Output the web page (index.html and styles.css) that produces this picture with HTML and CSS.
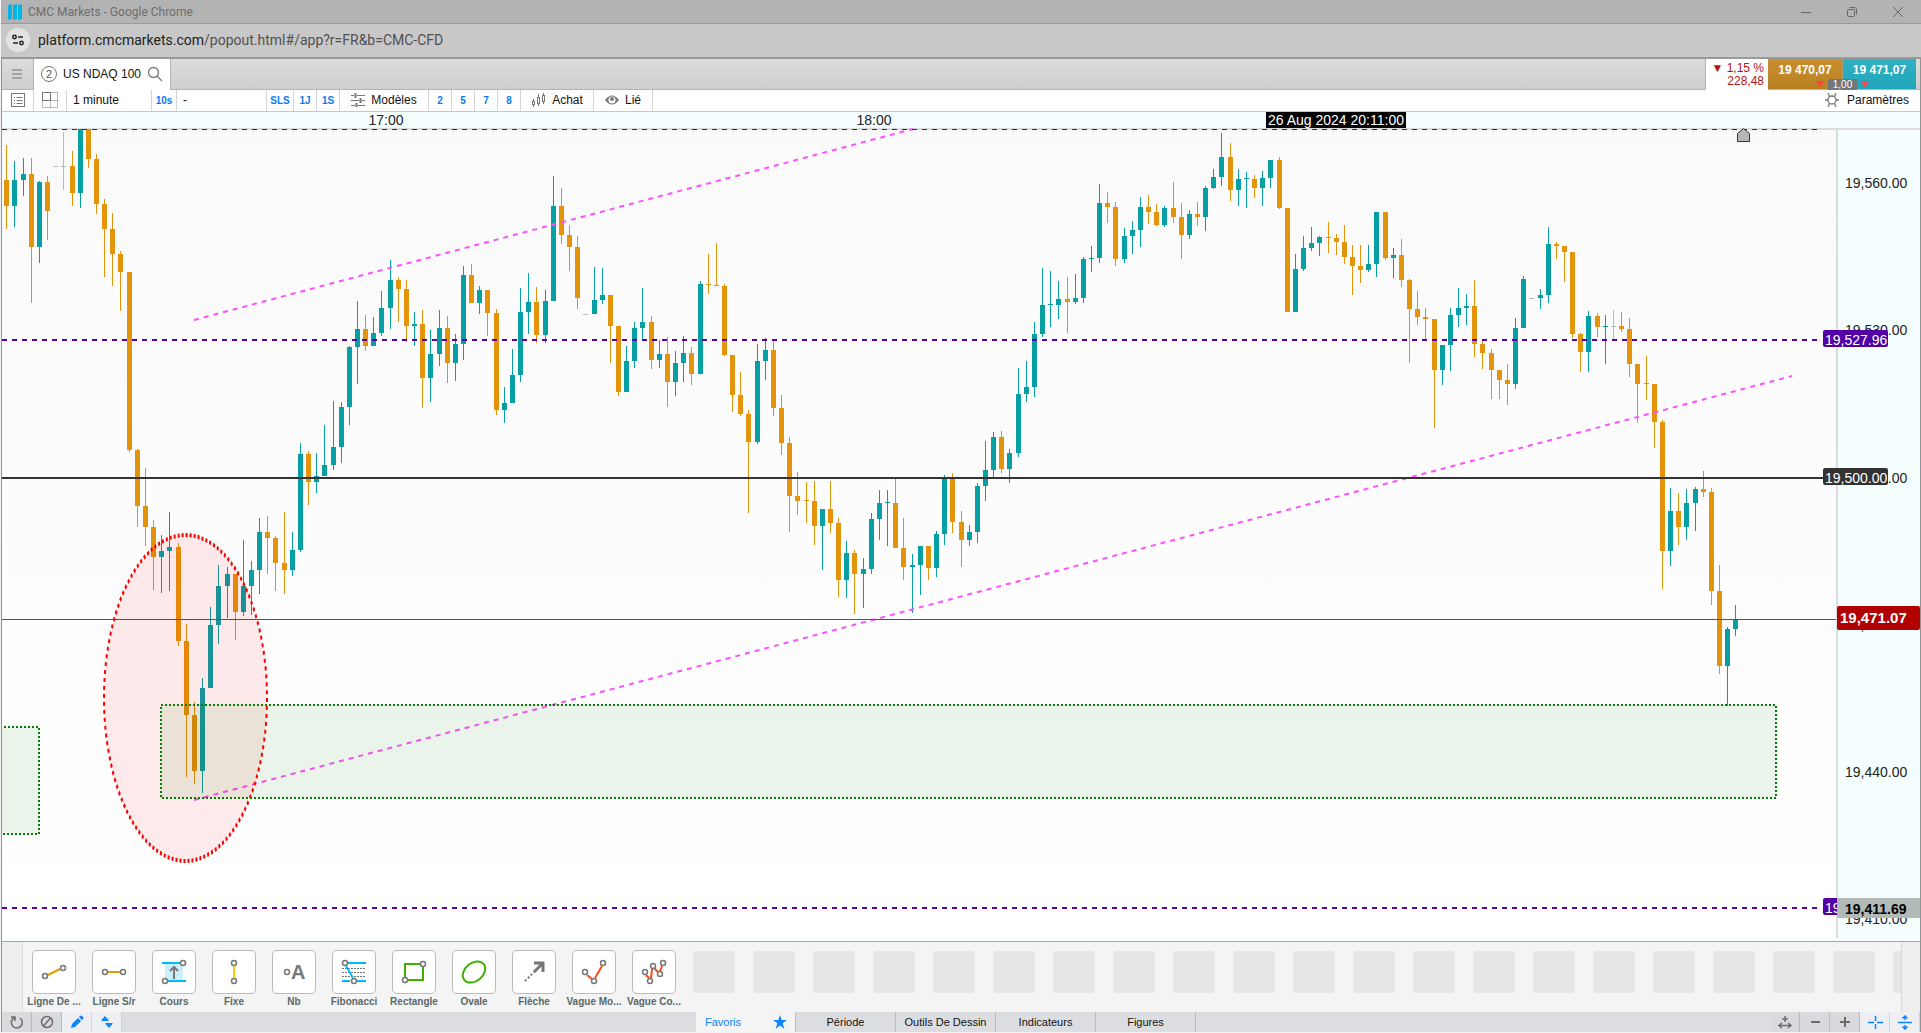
FILE: index.html
```html
<!DOCTYPE html>
<html lang="fr">
<head>
<meta charset="utf-8">
<title>CMC Markets</title>
<link rel="stylesheet" href="styles.css">
</head>
<body>
<header class="titlebar">
  <svg class="logo" width="16" height="16" viewBox="0 0 16 16"><path d="M0 1l4-1v15l-4 1zM5 1l4-1v15l-4 1zM10 1l4-1v15l-4 1z" fill="#00b4e6"/></svg>
  <span class="window-title">CMC Markets - Google Chrome</span>
  <div class="window-buttons">
    <button aria-label="Réduire"><svg width="12" height="12"><path d="M1 6.500h10"/></svg></button>
    <button aria-label="Restaurer"><svg width="12" height="12"><rect x="1.500" y="3.500" width="7" height="7" rx="1"/><path d="M3.500 1.500h5a2 2 0 0 1 2 2v5"/></svg></button>
    <button aria-label="Fermer"><svg width="12" height="12"><path d="M1 1l10 10M11 1L1 11"/></svg></button>
  </div>
</header>
<div class="addressbar">
  <button class="site-info" aria-label="Informations du site"><svg width="12" height="12" fill="none" stroke="#222" stroke-width="1.500"><circle cx="2.500" cy="3" r="1.700"/><path d="M6 3h5M1 9h5"/><circle cx="9.500" cy="9" r="1.700"/></svg></button>
  <span class="url"><b>platform.cmcmarkets.com</b>/popout.html#/app?r=FR&amp;b=CMC-CFD</span>
</div>
<main class="app">
  <div class="tabbar">
    <button class="menu" aria-label="Menu"><svg width="12" height="12"><path d="M1 2h10M1 6h10M1 10h10" stroke="#a4a4a4" stroke-width="2"/></svg></button>
    <div class="tab">
      <span class="tab-group">2</span>
      <span>US NDAQ 100</span>
      <svg width="16" height="16" fill="none" stroke="#777" stroke-width="1.300"><circle cx="6.500" cy="6.500" r="5"/><path d="M10 10l5 5"/></svg>
    </div>
    <div class="quote">
      <div class="change"><span>▼ 1,15 %</span><span>228,48</span></div>
      <button class="price sell">19 470,07</button>
      <button class="price buy">19 471,07</button>
      <div class="spread"><i></i><span>1,00</span><i></i></div>
    </div>
  </div>
  <div class="toolbar">
    <button class="w-list" aria-label="Liste"><svg width="14" height="14" fill="none" stroke="#777"><rect x=".5" y=".5" width="13" height="13"/><path d="M3 4.500h1M5.500 4.500h6M3 7.500h1M5.500 7.500h6M3 10.500h1M5.500 10.500h6"/></svg></button>
    <button class="w-grid" aria-label="Disposition"><svg width="16" height="16" fill="none" stroke="#777"><rect x=".5" y=".5" width="8" height="8"/><path d="M8.500.5h7v15h-15v-7M8.500 8.500h7M8.500 8.500v7" stroke-dasharray="1 1"/></svg></button>
    <select class="w-interval" aria-label="Intervalle"><option>1 minute</option></select>
    <button class="w-short quick">10s</button>
    <select class="w-range" aria-label="Plage"><option>-</option></select>
    <button class="w-sls quick">SLS</button>
    <button class="w-num quick">1J</button>
    <button class="w-num quick">1S</button>
    <button class="w-models"><svg width="14" height="14" fill="none" stroke="#777"><path d="M0 2.500h3M6 2.500h8M0 7.500h8M11 7.500h3M0 12.500h4M7 12.500h7"/><path d="M4.500 0v5M9.500 5v5M5.500 10v4" stroke-width="2"/></svg>Modèles</button>
    <button class="w-num quick">2</button>
    <button class="w-num quick">5</button>
    <button class="w-num quick">7</button>
    <button class="w-num quick">8</button>
    <button class="w-buy"><svg width="15" height="14" fill="none" stroke="#777"><path d="M2.500 6v2M2.500 12v2M7.500 1v3M7.500 11v2M12.500 0v2M12.500 9v2"/><rect x="1.500" y="8.500" width="2" height="3"/><rect x="6.500" y="4.500" width="2" height="6"/><rect x="11.500" y="2.500" width="2" height="6"/></svg>Achat</button>
    <button class="w-link"><svg width="14" height="12"><path d="M0 6Q7-3 14 6Q7 15 0 6z" fill="#777"/><circle cx="7" cy="6" r="3.500" fill="#fff"/><circle cx="7" cy="5" r="2" fill="#777"/></svg>Lié</button>
    <button class="settings"><svg width="14" height="14" fill="none" stroke="#777" stroke-width="1.300"><circle cx="7" cy="7" r="4"/><path d="M3 0l1.500 3.500M11 0L9.500 3.500M3 14l1.500-3.500M11 14L9.500 10.500M0 7h3M11 7h3"/></svg>Paramètres</button>
  </div>
  <section class="chart">
    <div class="chart-body">
      <svg class="plot" id="plot" aria-label="US NDAQ 100, 1 minute"></svg>
    </div>
    <svg class="axis" id="axis" aria-label="Échelle des prix"></svg>
  </section>
  <div class="toolbox">
    <div class="tools">
      <div class="tool"><button aria-labelledby="t1"><svg viewBox="0 0 44 44"><path class="gold" d="M16 25l12-6"/><circle cx="13" cy="26" r="2.500"/><circle cx="31" cy="18" r="2.500"/></svg></button><span id="t1">Ligne De ...</span></div>
      <div class="tool"><button aria-labelledby="t2"><svg viewBox="0 0 44 44"><path class="gold" d="M16 22h12"/><circle cx="13" cy="22" r="2.500"/><circle cx="31" cy="22" r="2.500"/></svg></button><span id="t2">Ligne S/r</span></div>
      <div class="tool"><button aria-labelledby="t3"><svg viewBox="0 0 44 44"><path d="M13 13h18v18H13z" fill="#cbeffc" stroke="none"/><path class="sky" d="M10 13h18M16 31h18"/><path d="M22 29V17M18 21l4-4 4 4" stroke-width="2"/><circle cx="31" cy="13" r="2.500"/><circle cx="13" cy="31" r="2.500"/></svg></button><span id="t3">Cours</span></div>
      <div class="tool"><button aria-labelledby="t4"><svg viewBox="0 0 44 44"><path class="yellow" d="M22 16v12"/><circle cx="22" cy="13" r="2.500"/><circle cx="22" cy="31" r="2.500"/></svg></button><span id="t4">Fixe</span></div>
      <div class="tool"><button aria-labelledby="t5"><svg viewBox="0 0 44 44"><circle cx="15" cy="22" r="2.500"/><text x="19" y="29">A</text></svg></button><span id="t5">Nb</span></div>
      <div class="tool"><button aria-labelledby="t6"><svg viewBox="0 0 44 44"><path d="M10 18.500h24M10 22.500h24M10 26.500h24" stroke-width="1" stroke-dasharray="2 1"/><path class="sky" d="M16 13h18M10 31h8M25 31h9M14 16l7 12"/><circle cx="13" cy="13" r="2.500"/><circle cx="22" cy="31" r="2.500"/></svg></button><span id="t6">Fibonacci</span></div>
      <div class="tool"><button aria-labelledby="t7"><svg viewBox="0 0 44 44"><path class="green" d="M28 14H13v13M16 30h15V17"/><circle cx="31" cy="14" r="2.500"/><circle cx="13" cy="30" r="2.500"/></svg></button><span id="t7">Rectangle</span></div>
      <div class="tool"><button aria-labelledby="t8"><svg viewBox="0 0 44 44"><ellipse class="green" cx="22" cy="22" rx="12.500" ry="9" transform="rotate(-40 22 22)"/></svg></button><span id="t8">Ovale</span></div>
      <div class="tool"><button aria-labelledby="t9"><svg viewBox="0 0 44 44"><path d="M13 31l9-9" stroke-width="2" stroke-dasharray="2 2"/><path d="M22 22l8-8M22 13h9v9" stroke-width="3"/></svg></button><span id="t9">Flèche</span></div>
      <div class="tool"><button aria-labelledby="t10"><svg viewBox="0 0 44 44"><path class="red" d="M15 25l5 4M23 28l7-12"/><circle cx="13" cy="22" r="2.500"/><circle cx="22" cy="31" r="2.500"/><circle cx="31" cy="13" r="2.500"/></svg></button><span id="t10">Vague Mo...</span></div>
      <div class="tool"><button aria-labelledby="t11"><svg viewBox="0 0 44 44"><path class="red" d="M14 25l3 3M19 28l1-9M22 18l4 4M28 21l2-5"/><circle cx="13" cy="22" r="2.500"/><circle cx="18" cy="31" r="2.500"/><circle cx="21" cy="16" r="2.500"/><circle cx="28" cy="24" r="2.500"/><circle cx="31" cy="13" r="2.500"/></svg></button><span id="t11">Vague Co...</span></div>
      <i class="slot"></i><i class="slot"></i><i class="slot"></i><i class="slot"></i><i class="slot"></i><i class="slot"></i><i class="slot"></i><i class="slot"></i><i class="slot"></i><i class="slot"></i><i class="slot"></i><i class="slot"></i><i class="slot"></i><i class="slot"></i><i class="slot"></i><i class="slot"></i><i class="slot"></i><i class="slot"></i><i class="slot"></i><i class="slot"></i><i class="slot"></i>
    </div>
  </div>
  <footer class="bottombar">
    <div class="group">
      <button aria-label="Rétablir"><svg width="16" height="16"><path d="M5.500 3.500A5.500 5.500 0 1 0 11 4M2 3h4v4"/></svg></button>
      <button aria-label="Masquer"><svg width="16" height="16"><circle cx="8" cy="8" r="5.500"/><path d="M4.500 12l7-8"/></svg></button>
      <button class="on" aria-label="Dessiner"><svg width="16" height="16"><path d="M2 14l1-4 6-6 3 3-6 6zM10 3l1-1q1-1 2 0l1 1q1 1 0 2l-1 1z" fill="#0a84ff" stroke="none"/></svg></button>
      <button class="on" aria-label="Déplacer"><svg width="16" height="16"><path d="M6 2l3.500 4v1h-7V6zM10 14l-3.500-4V9h7v1z" fill="#0a84ff" stroke="none"/></svg></button>
    </div>
    <nav class="group">
      <button class="section active">Favoris<svg width="14" height="14"><path d="M7 0l1.700 5H14l-4.300 3.200L11.300 14 7 10.500 2.700 14l1.600-5.800L0 5h5.300z" fill="#0a84ff" stroke="none"/></svg></button>
      <button class="section">Période</button>
      <button class="section">Outils De Dessin</button>
      <button class="section">Indicateurs</button>
      <button class="section">Figures</button>
    </nav>
    <div class="group">
      <button aria-label="Ajuster"><svg width="16" height="16"><path d="M8 2v6M5 5h6M2.500 11.500h11M5 9l-3 2.500L5 14M11 9l3 2.500L11 14"/></svg></button>
      <button aria-label="Zoom arrière"><svg width="16" height="16"><path d="M4 8h9" stroke-width="2"/></svg></button>
      <button aria-label="Zoom avant"><svg width="16" height="16"><path d="M3 8h10M8 3v10" stroke-width="2"/></svg></button>
      <button class="on" aria-label="Réticule"><svg width="16" height="16"><path d="M1 8.500h6M10 8.500h6M8.500 2v5M8.500 10v5"/></svg></button>
      <button class="on" aria-label="Étirer"><svg width="16" height="16"><path d="M1 8.500h14M8 2v4M8 11v4M5.500 4.500L8 2l2.500 2.500M5.500 12.500L8 15l2.500-2.500"/></svg></button>
    </div>
  </footer>
</main>
<script src="chart.js"></script>
</body>
</html>
```
FILE: styles.css
```css
* { box-sizing: border-box; }
body {
  margin: 0;
  height: 100vh;
  padding: 0 0 1px 1px;
  display: flex;
  flex-direction: column;
  overflow: hidden;
  background: #f2f2f2;
  color: #111;
  font: 12px/16px "Liberation Sans", Arial, sans-serif;
}
button, select {
  margin: 0;
  padding: 0;
  border: 0;
  background: none;
  color: inherit;
  font: inherit;
  cursor: pointer;
}
svg { display: block; flex: none; }

.titlebar {
  height: 24px;
  flex: none;
  display: flex;
  align-items: center;
  gap: 4px;
  padding-left: 7px;
  background: #b3b3b3;
  border-bottom: 1px solid #999;
  font-family: Roboto, "Open Sans", sans-serif;
  color: #6e6e6e;
}
.window-buttons { margin-left: auto; display: flex; }
.window-buttons button {
  width: 46px;
  display: flex;
  justify-content: center;
}
.window-buttons svg { fill: none; stroke: #666; }

.addressbar {
  height: 35px;
  flex: none;
  display: flex;
  align-items: center;
  gap: 8px;
  padding: 0 5px 2px;
  background: #c8c8c8;
  border-bottom: 2px solid #9a9a9a;
}
.site-info {
  width: 24px;
  height: 24px;
  border-radius: 12px;
  background: #e2e2e2;
  display: flex;
  align-items: center;
  justify-content: center;
}
.url { font: 14px/20px Roboto, "Open Sans", sans-serif; color: #505050; }
.url b { font-weight: 400; color: #222; }

.app {
  flex: 1;
  min-height: 0;
  display: flex;
  flex-direction: column;
  border: solid #8e9696;
  border-width: 0 1px;
}
.tabbar {
  height: 31px;
  flex: none;
  display: flex;
  padding-right: 4px;
  background: linear-gradient(#dcdcdc, #cecece);
  border-bottom: 1px solid #b4b4b4;
}
.menu {
  width: 31px;
  display: flex;
  align-items: center;
  padding-left: 9px;
}
.tab {
  height: 31px;
  display: flex;
  align-items: center;
  gap: 6px;
  padding: 0 7px 2px;
  background: #fff;
  border: solid #b4b4b4;
  border-width: 0 1px;
}
.tab-group {
  width: 16px;
  height: 16px;
  border: 1px solid #777;
  border-radius: 8px;
  font-size: 11px;
  line-height: 14px;
  text-align: center;
  color: #555;
}
.quote { position: relative; margin-left: auto; display: flex; }
.change {
  width: 63px;
  height: 31px;
  display: flex;
  flex-direction: column;
  align-items: flex-end;
  padding: 3px 4px 0 0;
  background: #fff;
  border-left: 1px solid #b4b4b4;
  color: #b41414;
  line-height: 13px;
}
.price {
  width: 74px;
  padding-bottom: 9px;
  color: #fff;
  font-weight: 700;
}
.sell { background: linear-gradient(#c88e2e, #b98022); }
.buy { background: linear-gradient(#30b0c4, #20a6bb); border-left: 1px solid #b0a070; }
.spread {
  position: absolute;
  right: 47px;
  bottom: -1px;
  display: flex;
  align-items: center;
  gap: 4px;
}
.spread span {
  width: 29px;
  border-radius: 2px 2px 0 0;
  background: #70767a;
  color: #fff;
  font-size: 10px;
  line-height: 11px;
  text-align: center;
}
.spread i { border: 4px solid transparent; border-top: 7px solid #f44; border-bottom: 0; }

.toolbar {
  height: 22px;
  flex: none;
  display: flex;
  background: #fff;
  border-bottom: 1px solid #c4c8c8;
}
.toolbar > * {
  display: flex;
  align-items: center;
  justify-content: center;
  gap: 6px;
  padding-bottom: 2px;
  border-right: 1px solid #d4d4d4;
}
.toolbar select { appearance: none; padding-left: 6px; }
.toolbar .quick { padding-bottom: 0; color: #0a7cf0; font-size: 10px; font-weight: 700; }
.w-list { width: 32px; }
.w-grid { width: 33px; }
.w-interval { width: 85px; }
.w-short { width: 25px; }
.w-range { width: 90px; }
.w-sls { width: 27px; }
.w-num { width: 23px; }
.w-models { width: 89px; }
.w-buy { width: 73px; }
.w-link { width: 59px; }
.toolbar .settings { margin-left: auto; padding-right: 11px; gap: 8px; border: 0; }

.chart {
  flex: 1;
  min-height: 0;
  display: flex;
  background: #f6ffff;
  border-bottom: 1px solid #9cacac;
}
.chart-body { flex: 1; min-width: 0; padding-bottom: 3px; }
.plot { width: 100%; height: 100%; }
.axis {
  width: 84px;
  height: 100%;
  overflow: visible;
}
.chart text { font-size: 14px; fill: #222; }
.chart .on-dark { fill: #fff; }
.chart .last { fill: #fff; font-size: 15px; font-weight: 700; }
.chart .cursor { fill: #000; font-weight: 700; }

.toolbox {
  height: 70px;
  flex: none;
  padding: 0 18px 0 20px;
  background: #eee;
}
.tools {
  height: 100%;
  display: flex;
  overflow: hidden;
  padding: 8px 0 0 1px;
  background: #f4f4f4;
  border: solid #d8dada;
  border-width: 0 1px;
}
.tool {
  width: 60px;
  flex: none;
  display: flex;
  flex-direction: column;
  align-items: center;
  gap: 2px;
  color: #5a6868;
  font-size: 10px;
  font-weight: 700;
  line-height: 12px;
  white-space: nowrap;
}
.tool button {
  width: 44px;
  height: 44px;
  border-radius: 5px;
  border: 1px solid #bbb;
  background: #fff;
}
.tool svg { margin: -1px; width: 44px; height: 44px; fill: none; stroke: #777; stroke-width: 1.5; }
.tool circle { fill: #fff; }
.tool text { font-size: 20px; fill: #777; stroke: none; }
.tool .gold { stroke: #e0a000; stroke-width: 2; }
.tool .yellow { stroke: #f8d000; stroke-width: 2; }
.tool .sky { stroke: #00baff; stroke-width: 2; }
.tool .green { stroke: #40b000; stroke-width: 2; }
.tool .red { stroke: #ff4a10; stroke-width: 2; }
.slot {
  width: 42px;
  height: 42px;
  flex: none;
  margin: 1px 9px 0;
  border-radius: 4px;
  background: #e5e5e5;
}

.bottombar {
  height: 20px;
  flex: none;
  display: flex;
  justify-content: space-between;
  background: #dcdde0;
  font-size: 11px;
}
.group { display: flex; }
.bottombar button {
  width: 30px;
  display: flex;
  align-items: center;
  justify-content: center;
  background: #d9dadd;
  border-right: 1px solid #b8bcbe;
}
.bottombar svg { fill: none; stroke: #6c6c6c; stroke-width: 1.5; }
.bottombar .on { background: #edeff2; border-color: #d0d4d6; }
.bottombar .on svg { stroke: #0a84ff; }
.bottombar .section { width: 100px; background: #dcdde0; }
.bottombar .active {
  justify-content: space-between;
  padding: 0 8px 0 9px;
  background: #f4f4f4;
  color: #0a84ff;
}
```
FILE: chart.js
```js
// Each candle: colour (T up, O down, G flat), x, high, body top, body bottom, low
const CANDLES = `
O6 145 180 206 229|T14 161 180 206 227|T23 158 174 180 196|O31 158 174 247 303|T39 181 182 247 263|O47 176 182 211 240
G55 166 166 167 167|G63 132 166 167 190|O72 151 166 193 206|T80 129 129 193 208|O88 129 129 159 168|O96 154 159 204 214
O104 199 204 229 277|O112 213 229 254 286|O120 251 254 272 311|O129 272 272 450 452|O137 449 450 506 527|O145 468 506 527 546
O153 520 527 557 590|T161 535 551 557 593|T169 512 547 551 591|O178 543 547 641 646|O186 624 641 715 777|O194 702 715 771 784
T202 678 688 771 793|T210 607 625 688 688|T218 565 586 625 644|T227 567 574 586 618|O235 574 574 612 640|T243 540 586 612 616
T251 561 570 586 615|T259 518 532 570 594|O267 516 532 538 574|O275 536 538 563 591|O284 512 563 570 594|T292 532 550 570 576
T300 443 454 550 552|O308 451 454 482 505|T316 453 476 482 493|T324 425 465 476 476|T333 401 447 465 470|T341 402 407 447 463
T349 346 347 407 425|T357 301 329 347 384|O365 315 329 346 351|T373 317 333 346 346|T381 291 308 333 336|T390 260 280 308 329
O398 277 280 289 322|O406 280 289 326 342|T414 312 324 326 346|O422 310 324 378 408|T430 330 354 378 402|T439 310 328 354 366
O447 316 328 363 383|T455 334 344 363 381|T463 266 275 344 360|O471 264 275 303 303|T479 286 290 303 314|O487 290 290 313 336
O496 309 313 410 415|T504 387 403 410 423|T512 349 375 403 403|T520 288 312 375 382|T528 273 302 312 334|O536 287 302 335 343
T545 290 301 335 343|T553 176 206 301 301|O561 188 206 235 244|O569 225 235 247 271|O577 236 247 298 309|G585 314 314 315 315
T594 267 300 314 314|T602 268 295 300 304|O610 295 295 326 363|O618 326 326 392 396|T626 346 361 392 392|T634 322 328 361 368
T642 288 322 328 340|O651 316 322 360 369|T659 340 354 360 368|O667 337 354 382 407|T675 351 363 382 396|T683 336 353 363 382
O691 347 353 374 385|T700 281 284 374 374|O708 254 284 285 294|O716 243 285 286 286|O724 284 286 355 356|O732 355 355 395 412
O740 372 395 414 416|O748 410 414 442 513|T757 344 361 442 444|T765 338 350 361 380|O773 340 350 408 416|O781 395 408 443 455
O789 437 443 496 532|O797 472 496 501 515|O806 482 500 501 523|O814 481 501 526 545|T822 509 509 526 570|O830 481 509 523 533
O838 518 523 580 597|T846 541 553 580 598|O854 550 553 574 614|T863 558 569 574 608|T871 513 519 569 574|T879 490 503 519 540
T887 490 502 503 546|O895 479 503 548 548|O903 518 548 567 580|T912 554 565 567 613|T920 546 546 565 595|O928 546 546 568 580
T936 531 534 568 577|T944 475 479 534 545|O952 473 479 522 533|O961 511 522 540 567|T969 525 532 540 546|T977 483 486 532 543
T985 441 470 486 501|T993 432 437 470 477|O1001 431 437 469 473|T1009 449 453 469 483|T1018 368 394 453 457|T1026 361 387 394 402
T1034 322 334 387 397|T1042 268 305 334 337|T1050 271 304 305 327|T1058 281 299 305 319|O1067 277 299 302 333|T1075 274 298 302 304
T1083 257 259 298 303|T1091 246 258 259 272|T1099 184 203 258 263|O1107 192 203 207 223|O1115 202 207 259 266|T1124 228 236 259 263
T1132 221 230 236 254|T1140 197 207 230 247|O1148 195 207 212 224|O1156 204 212 225 226|T1164 206 208 225 227|O1173 182 208 217 223
O1181 203 217 235 259|T1189 210 214 235 239|O1197 202 214 217 226|T1205 186 188 217 231|T1213 169 177 188 189|T1221 133 157 177 186
O1230 143 157 190 201|T1238 169 179 190 206|T1246 172 178 179 208|O1254 175 179 188 198|T1262 171 178 188 206|T1270 160 160 178 188
O1279 157 160 208 209|O1287 208 208 312 312|T1295 254 269 312 312|T1303 236 248 269 271|T1311 227 243 248 251|T1319 236 237 243 256
O1328 222 237 238 253|O1336 234 238 242 255|O1344 225 242 257 264|O1352 245 257 266 295|O1360 245 266 270 283|T1368 245 264 270 272
T1376 212 212 264 277|O1385 212 212 258 260|T1393 248 255 258 278|O1401 239 255 280 287|O1409 279 280 309 363|O1417 291 309 317 325
O1425 308 317 319 340|O1434 319 319 370 428|T1442 345 345 370 385|T1450 308 315 345 371|T1458 288 308 315 327|T1466 294 306 308 325
O1474 280 306 344 357|O1482 340 344 353 369|O1491 349 353 370 399|O1499 370 370 380 399|O1507 364 380 384 405|T1515 318 328 384 389
T1523 276 279 328 328|G1531 298 298 299 299|T1540 289 295 298 309|T1548 227 244 295 303|O1556 242 244 246 259|O1564 246 246 252 282
O1572 252 252 334 338|O1580 333 334 352 372|T1588 311 316 352 372|O1597 313 316 327 337|T1605 315 326 327 364|G1613 310 326 327 339
O1621 312 326 329 332|O1629 318 329 364 377|O1637 364 364 384 423|O1646 356 383 384 400|O1654 384 384 422 448|O1662 420 422 551 589
T1670 488 511 551 566|O1678 493 511 527 545|T1686 489 503 527 540|T1695 487 489 503 531|O1703 471 489 492 497|O1711 488 492 591 605
O1719 565 591 666 674|T1727 627 629 666 706|T1735 605 620 629 636`;

const COLOURS = { T: '#06a0a4', O: '#e3940a', G: '#b2bcba' };
const paths = { T: '', O: '', G: '' };
for (const item of CANDLES.trim().split(/[|\n]/)) {
  const kind = item[0];
  const [x, high, top, bottom, low] = item.slice(1).split(' ').map(Number);
  paths[kind] += `M${x} ${high}h1V${low}h-1z`;
  paths[kind] += `M${x - 2} ${top}h5V${bottom}h-5z`;
}
const candles = Object.keys(paths).map(k => `<path d="${paths[k]}" fill="${COLOURS[k]}"/>`).join('');

document.getElementById('plot').innerHTML = `
<defs><linearGradient id="bg" x2="0" y2="1"><stop offset="0" stop-color="#fafafa"/><stop offset="1" stop-color="#fff"/></linearGradient></defs>
<rect y="18" width="100%" height="100%" fill="url(#bg)"/>
<rect y="16" width="100%" height="2" fill="#dcdcdc"/>
<g transform="translate(-2 -112)">
  <text x="386" y="125" text-anchor="middle">17:00</text>
  <text x="874" y="125" text-anchor="middle">18:00</text>
  <rect x="1266" y="112" width="140" height="16"/>
  <text class="on-dark" x="1336" y="125" text-anchor="middle">26 Aug 2024 20:11:00</text>
  ${candles}
  <g fill="none">
    <g stroke="#ff50ff" stroke-width="2" stroke-dasharray="5 5"><path d="M194 320L913 129"/><path d="M194 800L1792 376"/></g>
    <g stroke="#5a00a8" stroke-dasharray="5 5"><path d="M2 129.5H1818"/><path d="M2 340H1818M2 908H1818" stroke-width="2"/></g>
    <path d="M2 478H1823" stroke="#333" stroke-width="2"/>
    <path d="M2 619.500H1838" stroke="#e01818"/>
  </g>
  <circle r="81.500" transform="translate(185.500 698) scale(1 2)" fill="#f00" fill-opacity=".08" stroke="red" stroke-width="2" stroke-dasharray="2 2"/>
  <g fill="#008000" fill-opacity=".08" stroke="#008000" stroke-width="2" stroke-dasharray="2 2">
    <rect x="161" y="705" width="1615" height="93"/>
    <rect x="-20" y="727" width="59" height="107"/>
  </g>
  <path d="M1737.500 141.500v-8l6-5 6 5v8z" fill="#b8b8b8" stroke="#333"/>
</g>`;

const label = (y, price) => `<text x="9" y="${y + 5}">${price}</text>`;
const tag = (y, price, fill) =>
  `<rect x="-13" y="${y}" width="65" height="17" rx="2" fill="${fill}"/><text class="on-dark" x="-11" y="${y + 15}">${price}</text>`;
document.getElementById('axis').innerHTML = `
<rect y="16" width="100%" height="2" fill="#dcdcdc"/>
<rect y="16" width="2" height="810" fill="#dcdcdc"/>
${label(71, '19,560.00')}${label(218, '19,530.00')}${label(366, '19,500.00')}
${label(513, '19,470.00')}${label(660, '19,440.00')}${label(807, '19,410.00')}
${tag(218, '19,527.96', '#5200a6')}${tag(356, '19,500.00', '#333')}${tag(786, '19,411.69', '#5200a6')}
<rect x="1" y="494" width="83" height="24" rx="2" fill="#b00000"/>
<text class="last" x="4" y="511">19,471.07</text>
<rect x="1" y="786" width="83" height="20" fill="#b2bab8"/>
<text class="cursor" x="9" y="802">19,411.69</text>`;
```
